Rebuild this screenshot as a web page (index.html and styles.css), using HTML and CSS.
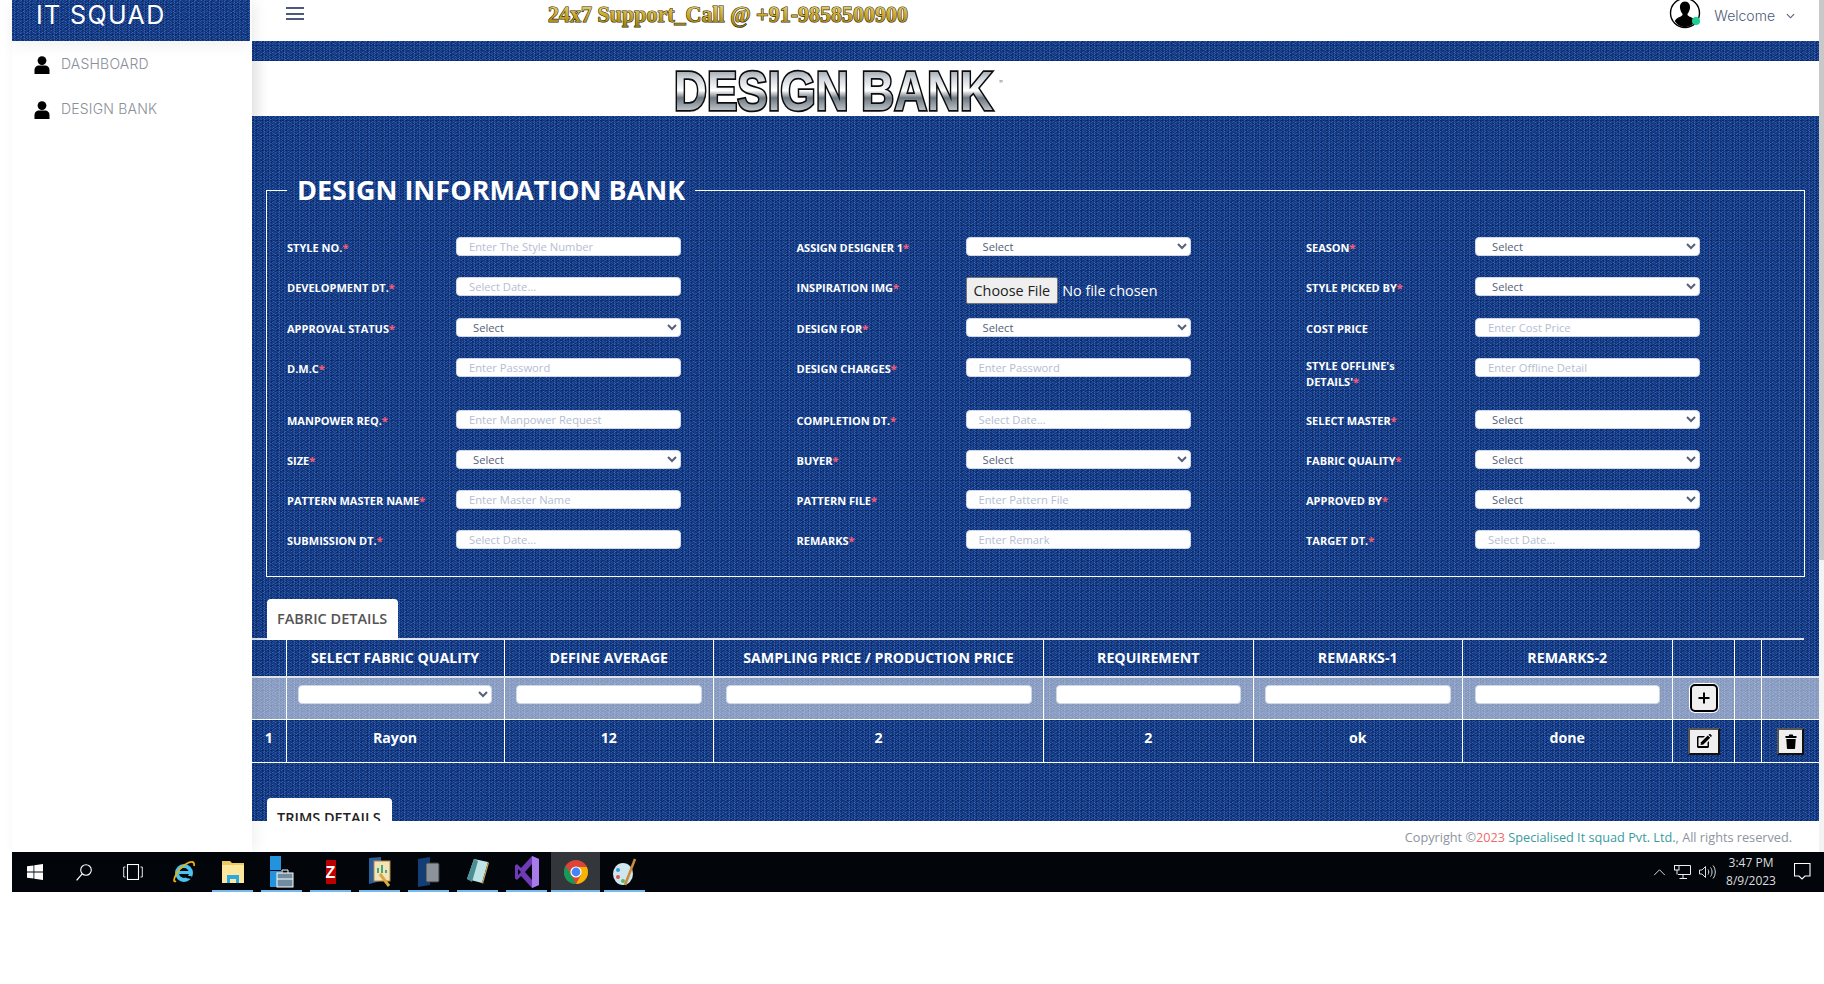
FILE: index.html
```html
<!DOCTYPE html>
<html lang="en">
<head>
<meta charset="utf-8">
<title>Design Bank</title>
<link rel="stylesheet" href="styles.css">
</head>
<body>
<svg class="defs" width="0" height="0" aria-hidden="true">
  <defs>
    <linearGradient id="chrome" x1="0" y1="0" x2="0" y2="1">
      <stop offset="0" stop-color="#59626c"/>
      <stop offset=".3" stop-color="#cfd5da"/>
      <stop offset=".5" stop-color="#ffffff"/>
      <stop offset=".62" stop-color="#6d7780"/>
      <stop offset=".85" stop-color="#c8ced4"/>
      <stop offset="1" stop-color="#f2f4f5"/>
    </linearGradient>
    <linearGradient id="gold" x1="0" y1="0" x2="0" y2="1">
      <stop offset="0" stop-color="#f3e38a"/>
      <stop offset=".55" stop-color="#c9a52c"/>
      <stop offset="1" stop-color="#8d7414"/>
    </linearGradient>
  </defs>
</svg>
<div class="app">
  <aside class="sidebar">
    <div class="brand denim">IT SQUAD</div>
    <nav class="nav">
      <a class="nav-item"><svg class="nav-icon" viewBox="0 0 16 18"><circle cx="8" cy="4.6" r="4.4"/><path d="M0.5 18v-3.6C0.5 11 3 9.6 5 9.6h6c2 0 4.5 1.4 4.5 4.8V18z"/></svg>DASHBOARD</a>
      <a class="nav-item"><svg class="nav-icon" viewBox="0 0 16 18"><circle cx="8" cy="4.6" r="4.4"/><path d="M0.5 18v-3.6C0.5 11 3 9.6 5 9.6h6c2 0 4.5 1.4 4.5 4.8V18z"/></svg>DESIGN BANK</a>
    </nav>
  </aside>
  <main class="main">
    <header class="topbar">
      <div class="burger"><span></span><span></span><span></span></div>
      <svg class="support" viewBox="0 0 362 28" width="362" height="28"><text x="0" y="21" textLength="360" lengthAdjust="spacingAndGlyphs">24x7 Support_Call @ +91-9858500900</text></svg>
      <div class="profile">
        <div class="avatar">
          <svg viewBox="0 0 32 32" width="32" height="32"><circle cx="16" cy="16" r="14.5" fill="#fff" stroke="#000" stroke-width="1.4"/><path d="M16 4.500c3.600 0 5.400 3 5 6.500-.3 2.600-1.600 4.600-2.400 5.800-.5 1 .2 2 1.600 2.600 2.700 1 5 2 6 4.600C24 27.800 20.200 30 16 30s-8-2.200-10.200-6c1-2.600 3.300-3.600 6-4.600 1.400-.6 2.100-1.600 1.600-2.600C12.600 15.600 11.300 13.600 11 11c-.4-3.500 1.400-6.500 5-6.500z"/></svg>
          <span class="status"></span>
        </div>
        <span class="welcome">Welcome</span>
        <svg class="chev" viewBox="0 0 10 6" width="9" height="6"><path d="M1 1l4 4 4-4" fill="none" stroke="#4a5a78" stroke-width="1.200"/></svg>
      </div>
    </header>
    <div class="content denim">
      <div class="band"></div>
      <div class="logo-row">
        <svg class="logo" viewBox="0 0 321 42" width="321" height="42"><text x="1" y="40.500" textLength="319" lengthAdjust="spacingAndGlyphs">DESIGN BANK</text></svg><span class="logo-mark">"</span>
      </div>
      <fieldset class="info">
        <legend>DESIGN INFORMATION BANK</legend>
        <div class="form-grid">
          <div class="field"><label>STYLE NO.<b>*</b></label><input placeholder="Enter The Style Number"></div>
          <div class="field"><label>ASSIGN DESIGNER 1<b>*</b></label><select><option>Select</option></select></div>
          <div class="field"><label>SEASON<b>*</b></label><select><option>Select</option></select></div>

          <div class="field"><label>DEVELOPMENT DT.<b>*</b></label><input placeholder="Select Date..."></div>
          <div class="field"><label>INSPIRATION IMG<b>*</b></label><input class="file" type="file"></div>
          <div class="field"><label>STYLE PICKED BY<b>*</b></label><select><option>Select</option></select></div>

          <div class="field"><label>APPROVAL STATUS<b>*</b></label><select><option>Select</option></select></div>
          <div class="field"><label>DESIGN FOR<b>*</b></label><select><option>Select</option></select></div>
          <div class="field"><label>COST PRICE</label><input placeholder="Enter Cost Price"></div>

          <div class="field"><label>D.M.C<b>*</b></label><input placeholder="Enter Password"></div>
          <div class="field"><label>DESIGN CHARGES<b>*</b></label><input placeholder="Enter Password"></div>
          <div class="field"><label class="two-line">STYLE OFFLINE's<br>DETAILS'<b>*</b></label><input placeholder="Enter Offline Detail"></div>

          <div class="field"><label>MANPOWER REQ.<b>*</b></label><input placeholder="Enter Manpower Request"></div>
          <div class="field"><label>COMPLETION DT.<b>*</b></label><input placeholder="Select Date..."></div>
          <div class="field"><label>SELECT MASTER<b>*</b></label><select><option>Select</option></select></div>

          <div class="field"><label>SIZE<b>*</b></label><select><option>Select</option></select></div>
          <div class="field"><label>BUYER<b>*</b></label><select><option>Select</option></select></div>
          <div class="field"><label>FABRIC QUALITY<b>*</b></label><select><option>Select</option></select></div>

          <div class="field"><label>PATTERN MASTER NAME<b>*</b></label><input placeholder="Enter Master Name"></div>
          <div class="field"><label>PATTERN FILE<b>*</b></label><input placeholder="Enter Pattern File"></div>
          <div class="field"><label>APPROVED BY<b>*</b></label><select><option>Select</option></select></div>

          <div class="field"><label>SUBMISSION DT.<b>*</b></label><input placeholder="Select Date..."></div>
          <div class="field"><label>REMARKS<b>*</b></label><input placeholder="Enter Remark"></div>
          <div class="field"><label>TARGET DT.<b>*</b></label><input placeholder="Select Date..."></div>
        </div>
      </fieldset>

      <div class="tabs"><span class="tab">FABRIC DETAILS</span></div>
      <table class="grid">
        <colgroup>
          <col class="c-no"><col class="c-quality"><col class="c-std"><col class="c-price"><col class="c-std"><col class="c-std"><col class="c-std"><col class="c-act"><col class="c-gap"><col class="c-del">
        </colgroup>
        <thead>
          <tr><th></th><th>SELECT FABRIC QUALITY</th><th>DEFINE AVERAGE</th><th>SAMPLING PRICE / PRODUCTION PRICE</th><th>REQUIREMENT</th><th>REMARKS-1</th><th>REMARKS-2</th><th></th><th></th><th></th></tr>
        </thead>
        <tbody>
          <tr class="entry">
            <td></td><td><select></select></td><td><input></td><td><input></td><td><input></td><td><input></td><td><input></td>
            <td><button class="btn-add" type="button"><svg viewBox="0 0 12 12" width="12" height="12"><path d="M6 .5v11M.5 6h11" stroke="#000" stroke-width="2"/></svg></button></td><td></td><td></td>
          </tr>
          <tr class="data">
            <td>1</td><td>Rayon</td><td>12</td><td>2</td><td>2</td><td>ok</td><td>done</td>
            <td><button class="btn-row btn-edit" type="button"><svg viewBox="0 0 16 14" width="16" height="14"><path d="M1 3.500c0-.8.7-1.500 1.500-1.500H9L7.500 3.500H2.500v8.500h9V8.500L13 7v5.500c0 .8-.7 1.500-1.500 1.500h-9c-.8 0-1.500-.7-1.500-1.500z"/><path d="M5 8.200 11.800 1.400l2.400 2.400L7.400 10.600 4.600 11z"/><path d="M12.500.8l.8-.6c.4-.3.900-.3 1.200 0l1 1c.3.400.3.800 0 1.200l-.6.700z"/></svg></button></td><td></td>
            <td><button class="btn-row btn-del" type="button"><svg viewBox="0 0 12 15" width="12" height="15"><path d="M.5 2h3.200l.6-1.500h3.400L8.300 2h3.200v2H.5z"/><path d="M1.300 5h9.400l-.6 9c0 .6-.5 1-1 1H2.900c-.5 0-1-.4-1-1z"/></svg></button></td>
          </tr>
        </tbody>
      </table>

      <div class="tabs tabs-next"><span class="tab tab-dark">TRIMS DETAILS</span></div>
    </div>
    <footer class="footer">Copyright ©<span class="year">2023</span>&nbsp;<span class="company">Specialised It squad Pvt. Ltd.</span>, All rights reserved.</footer>
  </main>
  <div class="scrollbar"><div class="thumb"></div></div>
</div>
<div class="taskbar">
  <div class="slot sys"><svg viewBox="0 0 16 16" width="16" height="16"><path fill="#fff" d="M0 2.300 6.500 1.400v6.200H0zM7.300 1.300 16 0v7.600H7.300zM0 8.400h6.500v6.200L0 13.700zM7.300 8.400H16V16l-8.700-1.300z"/></svg></div>
  <div class="slot sys"><svg viewBox="0 0 16 17" width="16" height="17"><circle cx="10" cy="6" r="5.300" fill="none" stroke="#fff" stroke-width="1.100"/><path d="M6.200 9.800.6 16.400" stroke="#fff" stroke-width="1.300"/></svg></div>
  <div class="slot sys"><svg viewBox="0 0 20 16" width="20" height="16" fill="none" stroke="#fff"><rect x="4.500" y=".5" width="11" height="15" stroke-width="1.100"/><path d="M2.500 3H.7v10h1.800M17.500 3h1.800v10h-1.800" stroke-width=".9"/></svg></div>
  <div class="slot"><svg viewBox="0 0 24 24" width="24" height="24"><circle cx="12" cy="13" r="7" fill="none" stroke="#4cc2f1" stroke-width="4"/><path d="M6 12.500h13" stroke="#4cc2f1" stroke-width="3"/><path d="M19.500 16h-5l-.5 2 5.500 1z" fill="#000"/><path d="M4 21C-1 24 4 10 14 4c5-3 9-3 8 2" fill="none" stroke="#e8b10e" stroke-width="1.800"/></svg></div>
  <div class="slot on"><svg viewBox="0 0 22 24" width="22" height="24"><path fill="#f0c95c" d="M0 1h8l2 2h12v20H0z"/><path fill="#fde79e" d="M0 5h22v18H0z"/><path fill="#29abe2" d="M5 23v-8h12v8h-3v-4H8v4z"/></svg></div>
  <div class="slot on"><svg viewBox="0 0 24 32" width="24" height="32"><path fill="#2293dc" d="M0 0h11v14H0zM0 15h11v16H0z"/><rect x="7" y="17" width="16" height="14" fill="#6f8ca0" stroke="#fff" stroke-width="1"/><path d="M12 17v-3h6v3M7 23h16" fill="none" stroke="#fff"/></svg></div>
  <div class="slot on"><span class="fz">Z</span></div>
  <div class="slot on"><svg viewBox="0 0 22 30" width="22" height="30"><path fill="#2a5d9c" d="M0 1l12-1v24L0 27z"/><rect x="5" y="4" width="16" height="20" fill="#f3e3bd" stroke="#b58a3f"/><path d="M9 16v-5M13 16V8M17 16v-3" stroke="#4a7" stroke-width="2"/><path d="M11 17l9 12" stroke="#d9a93f" stroke-width="3"/></svg></div>
  <div class="slot on"><svg viewBox="0 0 22 30" width="22" height="30"><path fill="#123e77" d="M0 2l12-2v28L0 30z"/><rect x="8" y="6" width="13" height="19" rx="1.500" fill="#8d939a" stroke="#3a3d42"/></svg></div>
  <div class="slot on"><svg viewBox="0 0 24 30" width="24" height="30"><path fill="#bfe4e6" d="M8 2l14 3-6 21L1 22z"/><path fill="#4a8f96" d="M8 2 1 22l5 3 6-21z"/><path fill="#c9a24a" d="M16 26l6-21 1 1-6 21z"/></svg></div>
  <div class="slot on"><svg viewBox="0 0 24 32" width="24" height="32"><path fill="#6e3ab5" d="M17 0 6 12 2 8 0 9.500v13L2 24l4-4 11 12 7-3V3zM3 19v-6l3 3zM17 8v16l-7-8z"/><path fill="#a97be8" d="M17 0l7 3v26l-7 3z"/></svg></div>
  <div class="slot on active"><svg viewBox="0 0 24 24" width="24" height="24"><circle cx="12" cy="12" r="12" fill="#db4437"/><path fill="#0f9d58" d="M1.600 5.800 7 15l5 9C5 24 0 18.500 0 12c0-2.300.6-4.400 1.600-6.200z"/><path fill="#f4b400" d="M12 7h10.800C23.600 8.500 24 10.200 24 12c0 6.600-5.400 12-12 12l5-9z"/><circle cx="12" cy="12" r="5.600" fill="#fff"/><circle cx="12" cy="12" r="4.400" fill="#4285f4"/></svg></div>
  <div class="slot on"><svg viewBox="0 0 24 30" width="24" height="30"><ellipse cx="10" cy="17" rx="10" ry="11" fill="#cfe6ef"/><circle cx="5" cy="13" r="2" fill="#3a9ad9"/><circle cx="5" cy="20" r="2" fill="#d9534f"/><circle cx="10" cy="24" r="2" fill="#5cb85c"/><path d="M12 28 22 2" stroke="#c98b3c" stroke-width="2.500"/></svg></div>
  <div class="tray">
    <svg class="caret" viewBox="0 0 14 9" width="13" height="8"><path d="M1 8l6-6 6 6" fill="none" stroke="#ddd" stroke-width="1.100"/></svg>
    <svg viewBox="0 0 17 14" width="17" height="14" fill="none" stroke="#eee"><path d="M5 .5h11.500v9H4M9 9.500V13M5.500 13.500H13"/><rect x=".5" y=".5" width="4.500" height="4.500" fill="#02050a"/><path d="M3 5v4.500"/></svg>
    <svg viewBox="0 0 17 14" width="17" height="14" fill="none" stroke="#ddd"><path d="M.5 5v4H3l3.500 3.500v-11L3 5z"/><path d="M9 4.500c1 1.500 1 3.500 0 5M11.500 2.500c2 2.500 2 6.500 0 9M14 .5c3 3.500 3 9.500 0 13"/></svg>
    <div class="clock"><span>3:47 PM</span><span>8/9/2023</span></div>
    <svg viewBox="0 0 17 18" width="17" height="18" fill="none" stroke="#fff"><path d="M.5.5h15.500v12.500H11L8 16l-3-3H.5z" stroke-width="1.100"/></svg>
  </div>
</div>
</body>
</html>
```

FILE: styles.css
```css
* { box-sizing: border-box; }

html, body {
  margin: 0;
  height: 100%;
  overflow: hidden;
  background: #fff;
  font-family: "Open Sans", sans-serif;
}

.defs {
  display: block;
  height: 0;
}

.denim {
  background-color: #1c52ac;
  background-image:
    conic-gradient(rgba(2, 14, 58, .42) 25%, transparent 0 50%, rgba(2, 14, 58, .42) 0 75%, transparent 0),
    conic-gradient(rgba(80, 135, 225, .42) 25%, transparent 0 50%, rgba(80, 135, 225, .42) 0 75%, transparent 0),
    conic-gradient(rgba(2, 14, 58, .24) 25%, transparent 0 50%, rgba(2, 14, 58, .24) 0 75%, transparent 0),
    linear-gradient(0deg, rgba(2, 14, 58, .26) 1px, transparent 1px);
  background-size: 3px 2px, 5px 3px, 7px 4px, 100% 5px;
}

.app {
  display: flex;
  height: 852px;
  padding-left: 12px;
}

/* Sidebar */
.sidebar {
  width: 240px;
  flex: none;
  background: #fff;
  position: relative;
  z-index: 2;
  box-shadow: 4px 0 14px rgba(0, 0, 0, .06);
}

.brand {
  width: 238px;
  height: 41px;
  padding-left: 24px;
  color: #fff;
  font-family: Inter, sans-serif;
  font-size: 25px;
  line-height: 31px;
  letter-spacing: 1.400px;
  box-shadow: 0 6px 14px rgba(0, 0, 0, .05);
}

.nav {
  padding: 0 0 0 22px;
}

.nav-item {
  display: flex;
  align-items: center;
  height: 45px;
  gap: 11px;
  color: #8a8f98;
  font-family: Inter, sans-serif;
  font-size: 14px;
  font-weight: 300;
  letter-spacing: .2px;
}

.nav-icon {
  width: 16px;
  height: 18px;
  flex: none;
  margin-top: 2px;
  fill: #000;
}

/* Main */
.main {
  flex: 1;
  min-width: 0;
  display: flex;
  flex-direction: column;
}

.topbar {
  height: 41px;
  flex: none;
  display: flex;
  align-items: flex-start;
  overflow: hidden;
  background: #fff;
}

.burger {
  width: 18px;
  margin: 7px 0 0 34px;
  display: flex;
  flex-direction: column;
  gap: 3.500px;
}

.burger span {
  height: 2px;
  background: #4a5a78;
}

.support {
  margin: 1px 0 0 244px;
  flex: none;
  overflow: visible;
}

.support text {
  fill: url(#gold);
  stroke: #2e2806;
  stroke-width: 1.200px;
  paint-order: stroke;
  font-family: "Liberation Serif", serif;
  font-size: 24px;
  font-weight: 700;
}

.profile {
  margin-left: auto;
  display: flex;
  align-items: center;
  padding-right: 24px;
  height: 30px;
}

.avatar {
  position: relative;
  width: 32px;
  height: 32px;
  margin-top: -4px;
}

.status {
  position: absolute;
  left: 23px;
  top: 20px;
  width: 8px;
  height: 8px;
  border-radius: 50%;
  background: #1dd08f;
}

.welcome {
  margin-left: 13px;
  color: #4a5a78;
  font-family: Inter, sans-serif;
  font-size: 14px;
  font-weight: 300;
}

.chev {
  margin: 2px 0 0 11px;
}

.content {
  flex: 1;
  min-height: 0;
  overflow: hidden;
}

.band {
  height: 20px;
}

.logo-row {
  height: 55px;
  background: linear-gradient(90deg, #f0f0f0 0, #fff 16px);
  padding: 8px 0 0 421px;
  display: flex;
  align-items: flex-start;
}

.logo {
  flex: none;
  overflow: visible;
}

.logo text {
  fill: url(#chrome);
  stroke: #0c0c0e;
  stroke-width: 3.500px;
  paint-order: stroke;
  font-family: "Liberation Sans", sans-serif;
  font-size: 55px;
  font-weight: 700;
}

.logo-mark {
  color: #777;
  font-size: 10px;
  margin: 8px 0 0 5px;
}

/* Design form */
.info {
  margin: 56px 14px 0;
  padding: 29px 0 6px 20px;
  min-width: 0;
  border: 1px solid #fff;
}

.info legend {
  margin-left: 0;
  padding: 0 10px;
  color: #fff;
  font-size: 27px;
  font-weight: 700;
  line-height: 36px;
}

.form-grid {
  display: grid;
  grid-template-columns: repeat(3, 509.500px);
  grid-template-rows: 40px 41px 40px 52px 40px 40px 40px 40px;
}

.field {
  display: flex;
  align-items: flex-start;
}

.field label {
  width: 169px;
  flex: none;
  padding: 3px 12px 0 0;
  color: #fff;
  font-size: 11px;
  font-weight: 700;
  line-height: 16px;
}

.field label.two-line {
  padding-top: 0;
}

.field label b {
  color: #ef5a78;
}

input, select {
  height: 19px;
  border: 1px solid #cfd6e6;
  border-radius: 4px;
  background: #fff;
  font-family: "Open Sans", sans-serif;
  font-size: 11.200px;
  color: #55607a;
  outline: none;
}

input, select {
  padding: 0 12px;
}

input::placeholder {
  color: #b4bdd2;
}

.field input, .field select {
  width: 225px;
}

.field input.file {
  height: 27px;
  padding: 0;
  border: 0;
  border-radius: 0;
  background: transparent;
  color: #fff;
  font-size: 14.400px;
}

.file::file-selector-button {
  height: 27px;
  padding: 0 7px;
  margin-right: 4px;
  font-family: "Open Sans", sans-serif;
  font-size: 14.400px;
  color: #222;
  background: #efefef;
  border: 1px solid #767676;
  border-radius: 2px;
}

/* Tabs */
.tabs {
  margin: 22px 15px 0 0;
  padding-left: 14.500px;
  height: 41px;
  border-bottom: 2px solid #dfe3ea;
}

.tabs-next {
  border-bottom: 0;
  margin-top: 35px;
}

.tab {
  display: inline-block;
  height: 41px;
  padding: 0 11px 0 10.500px;
  background: #fff;
  border-radius: 4px 4px 0 0;
  color: #555;
  font-size: 14.500px;
  font-weight: 600;
  line-height: 40px;
}

.tab-dark {
  color: #222;
}

/* Table */
.grid {
  width: 100%;
  table-layout: fixed;
  border-collapse: collapse;
  color: #fff;
  text-align: center;
  font-size: 14.200px;
  font-weight: 700;
}

.c-no { width: 34px; }
.c-quality { width: 218px; }
.c-std { width: 209.500px; }
.c-price { width: 330px; }
.c-act { width: 62.500px; }
.c-gap { width: 27px; }
.c-del { width: 57.500px; }

.grid th, .grid td {
  border: 1px solid #fff;
  border-width: 0 1px 1px 0;
  padding: 0;
}

.grid tr > :last-child {
  border-right: 0;
}

.grid th {
  height: 37px;
  padding-bottom: 2px;
  border-bottom: 2px solid #dfe3ea;
  font-weight: 700;
}

.entry td {
  height: 42px;
  vertical-align: top;
  padding-top: 7px;
  background: rgba(255, 255, 255, .5);
}

.entry input, .entry select {
  display: block;
  width: calc(100% - 23px);
  margin: 0 auto;
}

.data td {
  height: 43px;
  vertical-align: top;
  padding-top: 8px;
}

button {
  margin: 0;
  padding: 0;
  display: inline-flex;
  align-items: center;
  justify-content: center;
  background: #efefef;
}

.btn-add {
  width: 28px;
  height: 28px;
  margin: -1px 0 0 2px;
  border: 2.500px solid #000;
  border-radius: 5px;
  box-shadow: 0 0 0 1px #fff;
}

.btn-row {
  width: 32px;
  height: 27px;
  border: 2px solid;
  border-color: #555 #111 #111 #555;
}

.btn-edit {
  margin-left: 2px;
}

.btn-del {
  width: 27px;
}

/* Footer */
.footer {
  height: 31px;
  flex: none;
  background: #fff;
  padding-right: 27px;
  text-align: right;
  color: #8d94a0;
  font-size: 12.700px;
  line-height: 33px;
}

.year { color: #ef6a70; }
.company { color: #3a9aa0; }

.scrollbar {
  width: 5px;
  flex: none;
  background: #f3f3f3;
}

.thumb {
  height: 560px;
  background: #c8c8c8;
}

/* Taskbar */
.taskbar {
  height: 40px;
  margin-left: 12px;
  display: flex;
  background: #02050a;
}

.slot {
  position: relative;
  width: 49px;
  flex: none;
  display: flex;
  align-items: center;
  justify-content: center;
}

.slot.sys {
  padding-right: 3px;
}

.slot.on::after {
  content: "";
  position: absolute;
  left: 4px;
  right: 4px;
  bottom: 0;
  height: 2px;
  background: #76b9ed;
}

.slot.active {
  background: #33363a;
}

.slot.active::after {
  left: 0;
  right: 0;
}

.fz {
  width: 10px;
  height: 24px;
  background: #b00;
  color: #fff;
  font-family: "Liberation Sans", sans-serif;
  font-size: 16px;
  font-weight: 700;
  line-height: 26px;
  text-align: center;
}

.tray {
  margin-left: auto;
  display: flex;
  align-items: center;
  padding-right: 13px;
  gap: 8px;
}

.clock {
  width: 60px;
  margin: 0 5px 0 -3px;
  display: flex;
  flex-direction: column;
  align-items: center;
  color: #ddd;
  font-size: 12px;
  line-height: 18px;
}
```
